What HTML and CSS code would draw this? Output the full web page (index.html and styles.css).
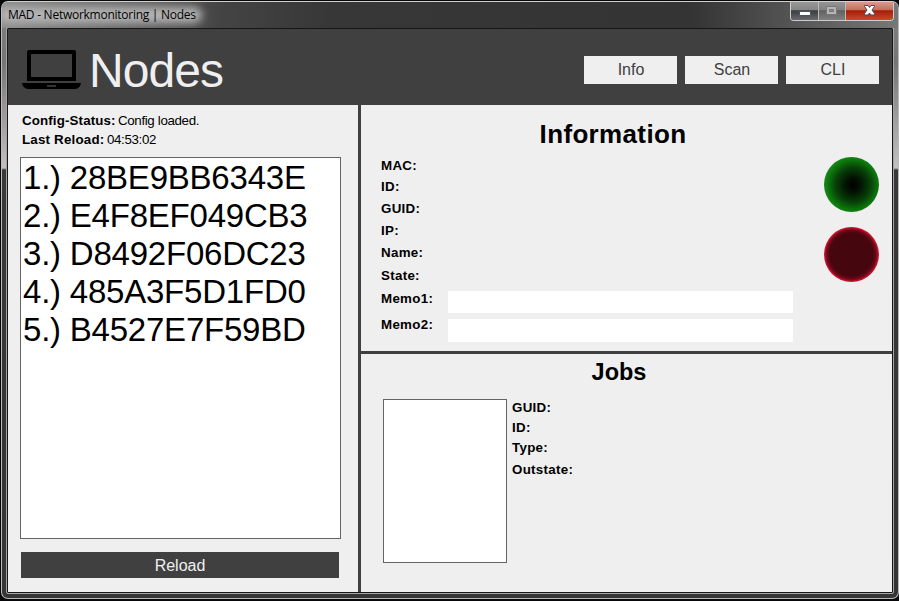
FILE: index.html
```
<!DOCTYPE html>
<html lang="en">
<head>
<meta charset="utf-8">
<title>MAD - Networkmonitoring | Nodes</title>
<link rel="stylesheet" href="styles.css">
</head>
<body>
<div class="window">
  <div class="titlebar">
    <span class="caption">MAD - Networkmonitoring | Nodes</span>
    <div class="controls">
      <span class="control minimize"><svg width="28" height="18"><rect x="8.5" y="9.500" width="11" height="4" rx=".5" fill="#fff" stroke="#4c5360"/></svg></span>
      <span class="control maximize"><svg width="26" height="18"><path d="M7.500 4.500h10v8h-10z" fill="#b4b4b4" stroke="#777"/><path d="M10.500 7.500h4v2h-4z" fill="#888" stroke="#777"/></svg></span>
      <span class="control close"><svg width="46" height="18"><path d="M18.500 3.500h3.500l1.500 2 1.500-2h3.500v1l-2.500 3.500 2.500 3.500v1.500h-3.500l-1.500-2-1.500 2h-3.500v-1.500l2.500-3.500-2.500-3.500z" fill="#fff" stroke="#4d4658"/></svg></span>
    </div>
  </div>
  <div class="client">
    <header class="header">
      <svg class="laptop" width="60" height="40" viewBox="0 0 60 40"><path fill="#000" fill-rule="evenodd" d="M7 0H52Q54 0 54 2V31H5V2Q5 0 7 0ZM9 4V27H50V4Z"/><path fill="#000" d="M0 33H59Q58 39 52 39H7Q1 39 0 33Z"/><rect x="25" y="35" width="9" height="2" fill="#333"/></svg>
      <h1>Nodes</h1>
      <nav><button>Info</button><button>Scan</button><button>CLI</button></nav>
    </header>
    <main>
      <section class="sidebar">
        <div class="status"><b>Config-Status:</b><span>Config loaded.</span></div>
        <div class="status reload-time"><b>Last Reload:</b><span>04:53:02</span></div>
        <div class="nodes">
          <div>1.) 28BE9BB6343E</div>
          <div>2.) E4F8EF049CB3</div>
          <div>3.) D8492F06DC23</div>
          <div>4.) 485A3F5D1FD0</div>
          <div>5.) B4527E7F59BD</div>
        </div>
        <button class="reload">Reload</button>
      </section>
      <div class="details">
        <section class="information">
          <h2>Information</h2>
          <div class="info-body">
            <div class="fields">
              <b>MAC:</b><b>ID:</b><b>GUID:</b><b>IP:</b><b>Name:</b><b>State:</b><b>Memo1:</b><b>Memo2:</b>
            </div>
            <div class="memos"><div class="memo"></div><div class="memo second"></div></div>
            <div class="lights"><div class="light green"></div><div class="light red"></div></div>
          </div>
        </section>
        <section class="jobs">
          <h2>Jobs</h2>
          <div class="jobs-body">
            <div class="job-list"></div>
            <div class="job-fields"><b>GUID:</b><b>ID:</b><b>Type:</b><b>Outstate:</b></div>
          </div>
        </section>
      </div>
    </main>
  </div>
</div>
</body>
</html>
```
FILE: styles.css
```
* { box-sizing: border-box; }
body { margin: 0; height: 601px; overflow: hidden; background: #08070a; font-family: "Liberation Sans", Arial, sans-serif; color: #000; }
h1, h2 { margin: 0; }
button { border: 0; padding: 0; font: 16px/28px "Liberation Sans", Arial, sans-serif; }
.window {
  width: 898px; height: 598px; margin-left: 1px; padding: 0 5px 5px;
  border: 1px solid #b9b9b9; border-top-color: #d0d0d0; border-radius: 7px;
  transform: translateY(1px);
  background: linear-gradient(#858283 0, #777475 60px, #aaa6a7 130px, #c4c0c1 166px, #393939 168px, #353535 100%);
}
.titlebar {
  position: relative;
  display: flex; justify-content: space-between; height: 26px; margin: 0 -5px; padding-right: 4px;
  border-radius: 6px 6px 0 0; overflow: hidden;
  background: linear-gradient(90deg, #8d8b8c 0, #7a7a7a 60px, #606060 150px, #444 218px, #373737 330px, #343434 690px, #555 790px, #777 100%);
}
.titlebar::before { content: ""; position: absolute; left: -4px; top: 5px; width: 204px; height: 16px; border-radius: 8px; background: #b4b4b4; filter: blur(4px); }
.caption { position: relative; padding-left: 6px; font: 12px/26px "Open Sans", sans-serif; letter-spacing: -.26px; white-space: nowrap; }
.controls { display: flex; width: 104px; height: 19px; border: 1px solid #ccc; border-top: 0; border-radius: 0 0 4px 4px; overflow: hidden; }
.control { height: 18px; border-right: 1px solid #bbb; background: linear-gradient(#989898, #858585 45%, #3b3d40 48%, #686a6d 100%); }
.control svg { display: block; }
.minimize { width: 28px; }
.maximize { width: 27px; background: linear-gradient(#959595, #808080 45%, #606060 48%, #808080 100%); }
.close { width: 47px; border-right: 0; background: linear-gradient(#d99a8c, #c96b58 45%, #a51d08 48%, #c84a2c 100%); }
.client { width: 886px; height: 565px; border: 1px solid #161616; outline: 1px solid #a5a5a5; background: #efefef; border-radius: 1px; }
.header { display: flex; height: 76px; padding: 21px 13px 0 14px; background: #404040; }
.laptop { flex: none; }
h1 { margin: -7px 0 0 7px; color: #efefef; font: 48px/56px "Liberation Sans", Arial, sans-serif; letter-spacing: -.95px; }
nav { display: flex; gap: 8px; margin: 6px 0 0 auto; }
nav button { width: 93px; height: 28px; padding-left: 1px; background: #efefef; color: #404040; }
main { display: flex; height: 487px; }
.sidebar { width: 353px; padding: 6px 0 0 12px; border-right: 3px solid #404040; }
.status { display: flex; gap: 2px; height: 19px; margin-left: 2px; font-size: 13.33px; line-height: 19px; white-space: nowrap; }
.status b { width: 94px; letter-spacing: .13px; }
.status span { letter-spacing: -.35px; }
.reload-time b { width: 83px; letter-spacing: .2px; }
.nodes { width: 321px; height: 382px; margin-top: 8px; padding: 1px 2px; border: 1px solid #646464; background: #fff; font-size: 33px; line-height: 38px; letter-spacing: -.22px; white-space: nowrap; }
.reload { display: block; width: 318px; height: 26px; margin: 13px 0 0 1px; background: #404040; color: #efefef; line-height: 27px; }
.details { width: 531px; }
.information { height: 249px; padding-top: 14px; border-bottom: 3px solid #404040; }
h2 { text-align: center; font-size: 26px; line-height: 30px; }
.information h2 { padding-right: 27px; letter-spacing: .35px; }
.info-body { display: flex; padding: 8px 13px 0 20px; }
.fields, .job-fields { display: grid; align-content: start; padding-top: 1px; font-size: 13.33px; line-height: 16px; letter-spacing: .3px; }
.fields { width: 67px; grid-template-rows: 21px 22px 22px 22px 23px 23px 26px 17px; }
.fields b, .job-fields b { white-space: nowrap; }
.memos { width: 345px; padding-top: 134px; }
.memo { height: 22px; background: #fff; }
.second { height: 23px; margin-top: 6px; }
.lights { display: grid; gap: 15px; margin-left: auto; align-content: start; }
.light { width: 55px; height: 55px; border-radius: 50%; }
.green { background: radial-gradient(circle at 29px 28px, #000 0, #031203 18%, #074007 43%, #0c760c 62%, #1b8c1b 74%); }
.red { background: radial-gradient(circle closest-side, #45060e 0, #45060e 78%, #70091a 90%, #b51028 96%, #d51430 100%); }
.jobs { padding-top: 3px; }
.jobs h2 { padding-right: 15px; font-size: 23.5px; }
.jobs-body { display: flex; gap: 5px; padding: 12px 0 0 22px; }
.job-list { width: 124px; height: 164px; border: 1px solid #646464; background: #fff; }
.job-fields { grid-template-rows: 20px 20px 22px 18px; letter-spacing: .3px; }
```
